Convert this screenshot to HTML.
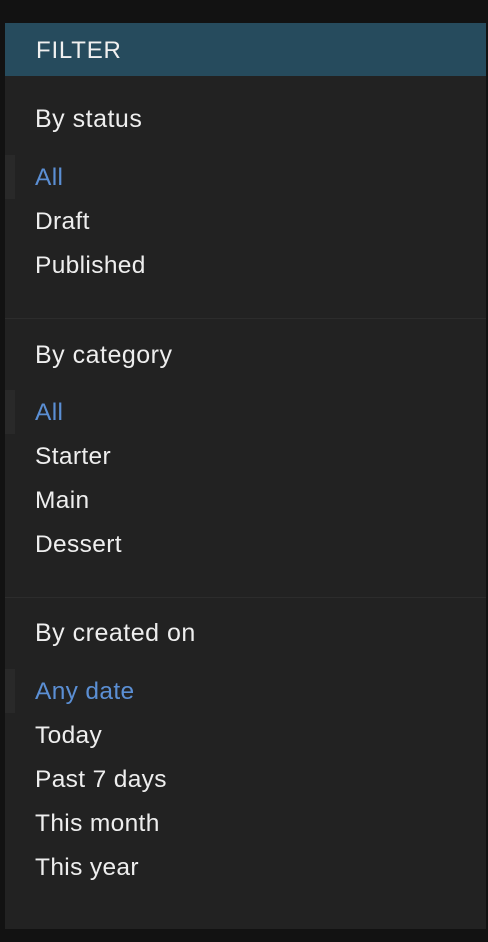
<!DOCTYPE html><html><head><style>
body{margin:0;width:488px;height:942px;background:#121212;font-family:"Liberation Sans",sans-serif;overflow:hidden}
.p{position:absolute;left:5px;top:23px;width:481px;height:906px;background:#222}
.h{height:53px;background:#264b5d;color:#f0f0f0;font-size:24px;line-height:55px;padding-left:31px;letter-spacing:0.8px}
.t{position:absolute;left:30px;font-size:24.5px;color:#eee;line-height:30px;letter-spacing:0.35px;margin-top:1px}
.g{font-size:25px;letter-spacing:0.5px}
.a{color:#5b8fd4}
.m{position:absolute;left:0;width:10px;height:44px;background:#292929}
.d{position:absolute;left:0;width:481px;height:1px;background:#2c2c2c}
</style></head><body><div class="p">
<div class="h">FILTER</div>
<div class="t g" style="top:80px">By status</div>
<div class="m" style="top:132px"></div>
<div class="t a" style="top:139px">All</div>
<div class="t" style="top:183px">Draft</div>
<div class="t" style="top:227px">Published</div>
<div class="d" style="top:295px"></div>
<div class="t g" style="top:316px">By category</div>
<div class="m" style="top:367px"></div>
<div class="t a" style="top:374px">All</div>
<div class="t" style="top:418px">Starter</div>
<div class="t" style="top:462px">Main</div>
<div class="t" style="top:506px">Dessert</div>
<div class="d" style="top:574px"></div>
<div class="t g" style="top:594px">By created on</div>
<div class="m" style="top:646px"></div>
<div class="t a" style="top:653px">Any date</div>
<div class="t" style="top:697px">Today</div>
<div class="t" style="top:741px">Past 7 days</div>
<div class="t" style="top:785px">This month</div>
<div class="t" style="top:829px">This year</div>
</div></body></html>
